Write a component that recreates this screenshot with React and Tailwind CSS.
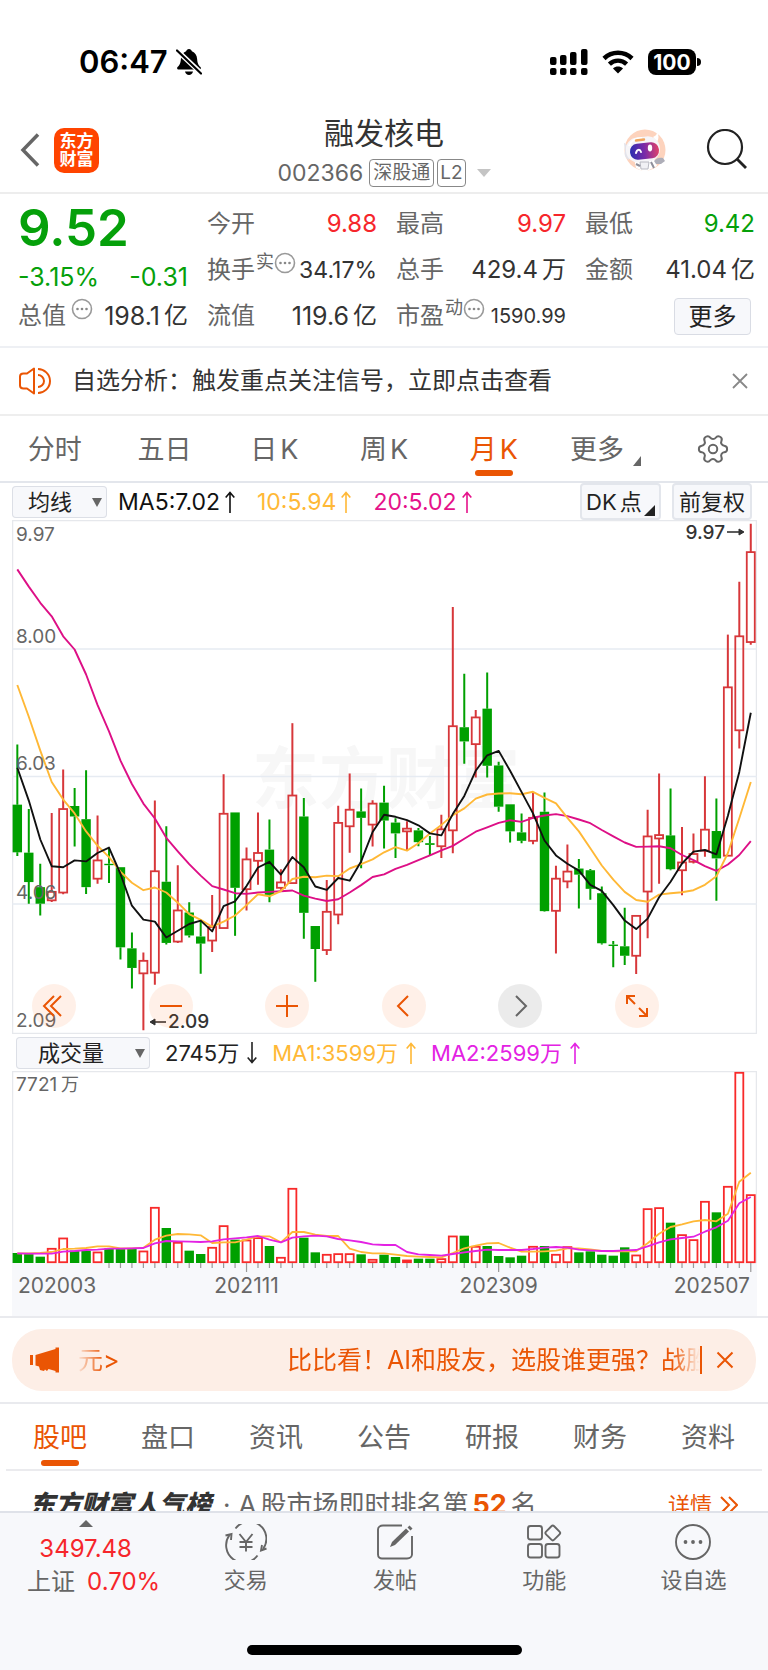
import React from "react";
import { Settings } from "lucide-react";

const STEP = 11.46;
const FIRST_X = 5.33;
const cx = (i) => FIRST_X + i * STEP;

// Each month: [direction, high, body top, body bottom, low], in plot units from the top of the price scale.
const CANDLES = [
  ["g", 679, 857, 998, 1009], ["g", 870, 999, 1086, 1150], ["g", 1032, 1101, 1150, 1185], ["r", 882, 1115, 1140, 1145],
  ["r", 753, 870, 1117, 1122], ["g", 808, 861, 892, 981], ["g", 755, 900, 1101, 1121], ["r", 889, 1022, 1076, 1091],
  ["g", 985, 1032, 1036, 1089], ["g", 1042, 1042, 1279, 1315], ["g", 1235, 1282, 1340, 1401], ["r", 1294, 1319, 1356, 1524],
  ["r", 845, 1054, 1354, 1390], ["g", 921, 1085, 1266, 1271], ["r", 1036, 1170, 1262, 1266], ["g", 1146, 1176, 1244, 1250],
  ["g", 1196, 1247, 1268, 1357], ["r", 1124, 1219, 1259, 1293], ["r", 767, 884, 1222, 1222], ["g", 880, 880, 1103, 1245],
  ["r", 984, 1019, 1107, 1170], ["r", 880, 1000, 1023, 1094], ["g", 901, 990, 1124, 1146], ["r", 1048, 1087, 1103, 1109],
  ["r", 616, 830, 1089, 1089], ["g", 837, 892, 1177, 1254], ["g", 1216, 1216, 1284, 1381], ["r", 1080, 1174, 1287, 1302],
  ["r", 860, 911, 1182, 1211], ["r", 765, 872, 921, 999], ["g", 809, 877, 896, 1045], ["r", 844, 854, 916, 981],
  ["g", 801, 851, 904, 987], ["g", 897, 910, 942, 1015], ["r", 906, 928, 936, 993], ["g", 926, 933, 968, 980],
  ["g", 950, 971, 976, 1007], ["r", 887, 930, 980, 1015], ["r", 272, 625, 933, 1001], ["g", 470, 628, 670, 736],
  ["r", 577, 599, 678, 777], ["g", 466, 573, 742, 777], ["g", 730, 741, 863, 878], ["g", 856, 856, 936, 969],
  ["g", 883, 939, 964, 971], ["r", 820, 896, 964, 974], ["g", 821, 878, 1172, 1174], ["r", 1038, 1076, 1171, 1297],
  ["r", 975, 1055, 1084, 1104], ["g", 1018, 1046, 1064, 1164], ["g", 1047, 1051, 1106, 1138], ["g", 1099, 1119, 1267, 1271],
  ["g", 1260, 1271, 1275, 1338], ["g", 1162, 1276, 1304, 1331], ["r", 1186, 1186, 1304, 1358], ["r", 872, 951, 1114, 1252],
  ["r", 765, 947, 957, 1091], ["g", 809, 948, 1048, 1051], ["r", 923, 1028, 1051, 1125], ["r", 942, 1003, 1026, 1031],
  ["r", 773, 931, 993, 1011], ["g", 839, 935, 1016, 1141], ["r", 354, 510, 1008, 1008], ["r", 198, 359, 637, 691],
  ["r", 26, 110, 376, 384],
];
const py = (v) => (v - 15) / 2.958;

const MA5 = [748, 845, 960, 1039, 1042, 1022, 1025, 1000, 984, 1062, 1156, 1197, 1203, 1250, 1230, 1210, 1200, 1232, 1157, 1143, 1098, 1043, 1026, 1064, 1012, 1042, 1099, 1109, 1074, 1082, 1025, 938, 887, 893, 903, 918, 942, 948, 885, 831, 757, 711, 698, 757, 820, 883, 963, 1007, 1032, 1052, 1094, 1112, 1154, 1200, 1225, 1194, 1131, 1085, 1031, 996, 991, 1004, 890, 760, 585];
const MA10 = [503, 597, 697, 790, 842, 883, 936, 978, 1012, 1055, 1088, 1110, 1102, 1117, 1147, 1181, 1198, 1218, 1203, 1185, 1154, 1122, 1128, 1113, 1077, 1070, 1072, 1067, 1069, 1046, 1033, 1019, 998, 983, 993, 971, 942, 917, 888, 868, 839, 827, 824, 823, 826, 819, 837, 853, 896, 936, 986, 1037, 1079, 1115, 1139, 1144, 1123, 1119, 1116, 1110, 1094, 1069, 1000, 897, 790];
const MA20 = [161, 212, 260, 300, 359, 398, 472, 562, 640, 727, 796, 854, 898, 955, 995, 1033, 1067, 1098, 1108, 1119, 1121, 1117, 1115, 1113, 1111, 1126, 1135, 1142, 1137, 1117, 1095, 1071, 1063, 1047, 1035, 1021, 1007, 992, 979, 958, 937, 924, 911, 903, 908, 896, 889, 885, 891, 901, 912, 932, 951, 969, 982, 981, 980, 986, 1006, 1021, 1039, 1053, 1034, 1006, 965];

const VOLUME = [670, 672, 681, 655, 624, 663, 663, 666, 656, 658, 656, 663, 532, 595, 637, 663, 673, 652, 587, 630, 630, 623, 649, 682, 475, 624, 668, 673, 671, 671, 674, 688, 675, 682, 690, 687, 687, 686, 618, 618, 649, 649, 679, 683, 678, 649, 649, 673, 650, 668, 665, 675, 678, 653, 675, 536, 533, 579, 614, 629, 514, 548, 469, 127, 494];
const VMA1 = [671, 671, 670, 667, 658, 657, 655, 650, 650, 656, 656, 654, 630, 618, 613, 614, 617, 640, 638, 638, 630, 620, 620, 638, 607, 607, 615, 619, 619, 657, 667, 671, 671, 675, 679, 681, 682, 683, 670, 656, 648, 641, 640, 654, 666, 666, 665, 663, 656, 656, 659, 664, 665, 664, 665, 641, 612, 592, 584, 575, 571, 575, 552, 456, 429];
const VMA2 = [671, 672, 672, 672, 666, 664, 661, 660, 657, 657, 656, 655, 641, 634, 635, 636, 637, 635, 629, 626, 623, 619, 630, 638, 624, 620, 618, 620, 628, 632, 637, 644, 646, 646, 667, 674, 676, 678, 673, 668, 664, 660, 661, 661, 661, 658, 654, 652, 654, 660, 662, 664, 664, 662, 661, 650, 638, 629, 625, 621, 606, 593, 573, 521, 502];
const vy = (v) => (v - 124) / 3;

const points = (list, fn) => list.map((v, i) => `${cx(i).toFixed(1)},${fn(v).toFixed(1)}`).join(" ");

function StatusBar() {
  return (
    <div className="flex h-[100px] items-center justify-between pt-6 pr-[67px] pl-[79px]">
      <div className="flex items-center gap-2">
        <span className="text-[31px] leading-9 font-semibold text-black">06:47</span>
        <svg width="26" height="28" viewBox="0 0 26 28" aria-hidden="true">
          <path d="M13 1c1.5 0 2.6 1 2.9 2.3 3.2 1.2 5 4 5.200 7.500.2 4.600 1.500 6.600 3.400 8.300.7.700.5 2.400-.8 2.400H2.300c-1.300 0-1.500-1.700-.8-2.400 1.900-1.700 3.200-3.700 3.400-8.300.2-3.500 2-6.300 5.200-7.500C10.400 2 11.500 1 13 1Z" />
          <path d="M9 23.500h8c-.5 2-2 3.500-4 3.500s-3.500-1.500-4-3.500Z" />
          <path d="M0 1.500 26 26" stroke="#fff" strokeWidth="5" />
          <path d="M1 2.500 25 25.500" stroke="#000" strokeWidth="2.200" strokeLinecap="round" />
        </svg>
      </div>
      <div className="flex items-center gap-[14px]">
        <svg width="38" height="26" viewBox="0 0 38 26" aria-hidden="true">
          {[[0, 8], [10, 6], [20, 3], [31, 0]].map(([x, y]) => (
            <g key={x}>
              <rect x={x} y={y} width="6.500" height={16 - y} rx="2" />
              <rect x={x} y="19" width="6.500" height="7" rx="2" />
            </g>
          ))}
        </svg>
        <svg width="32" height="24" viewBox="0 0 32 24" aria-hidden="true" fill="none" stroke="#000">
          <path d="M2 8.500c8-7.600 20-7.600 28 0" strokeWidth="4.600" />
          <path d="M7.400 14.200c5-4.800 12.200-4.800 17.200 0" strokeWidth="4.400" />
          <path d="m16 23.500-5-5c3-2.600 7-2.600 10 0Z" fill="#000" stroke="none" />
        </svg>
        <div className="flex items-center gap-px">
          <span className="flex h-[26px] w-12 items-center justify-center rounded-lg bg-black text-[21px] leading-none font-bold text-white">100</span>
          <span className="h-2 w-1 rounded-r-full bg-black" />
        </div>
      </div>
    </div>
  );
}

function Robot() {
  return (
    <svg width="44" height="44" viewBox="0 0 44 44" aria-hidden="true">
      <defs>
        <linearGradient id="visor" x1="0" x2="1">
          <stop offset="0" stopColor="#2b2fb0" />
          <stop offset="0.5" stopColor="#7a2aa8" />
          <stop offset="1" stopColor="#e0436a" />
        </linearGradient>
      </defs>
      <circle cx="23" cy="22" r="20.500" fill="#fdd3bd" />
      <path d="M12 30h20l3 8-12 6-9-4Z" fill="#fff" />
      <path d="M31 9c3-1 4-3 4-5 2 3 2 7 0 10Z" fill="#fff" />
      <path d="M2 15c1 0 3 2 4 3l1 14c-4-2-5-5-4-9Z" fill="#e3e3ea" />
      <rect x="4" y="9" width="34" height="25" rx="12" fill="#f6f5f8" transform="rotate(-6 20 22)" />
      <path d="M7 18c2-5 7-8 13-8" stroke="#fff" strokeWidth="2" fill="none" />
      <rect x="8" y="15" width="29" height="16" rx="7.500" fill="url(#visor)" transform="rotate(-6 22 23)" />
      <path d="M14 25c1-4 4-4 5-1" stroke="#fff" strokeWidth="2" fill="none" strokeLinecap="round" />
      <ellipse cx="28" cy="20" rx="2.200" ry="3.400" fill="#fff" />
      <path d="M14 12.500 22 11.500" stroke="#f0a55c" strokeWidth="2.400" strokeLinecap="round" />
      <path d="M18 34h9l-1 7h-7Z" fill="#f1f1f5" stroke="#b9b9c2" />
      <path d="m14 36 4 2M29 34l3 6" stroke="#8f8f9a" strokeWidth="2" />
      <path d="M32 33c2-3 6-4 9-3l2 3-4 3h-5Z" fill="#aeaeb8" />
    </svg>
  );
}

function Header() {
  return (
    <header className="grid h-[94px] grid-cols-[1fr_auto_1fr] items-center border-b-2 border-[#ededed] px-5 pt-2">
      <div className="flex items-center gap-[14px]">
        <button type="button" aria-label="返回">
          <svg width="20" height="34" viewBox="0 0 20 34" fill="none" stroke="#666" strokeWidth="3.500" aria-hidden="true">
            <path d="M18 1.500 3 17l15 15.500" />
          </svg>
        </button>
        <a href="#home" className="flex h-[45px] w-[45px] flex-col items-center justify-center rounded-[10px] bg-[#ff4400] text-[17px] leading-[18px] font-bold text-white">
          <span>东方</span>
          <span>财富</span>
        </a>
      </div>
      <div className="flex flex-col items-center gap-[6px]">
        <h1 className="text-[30px] leading-10 text-[#333]">融发核电</h1>
        <div className="flex items-center gap-[3px] text-[#666]">
          <span className="pr-[3px] text-[23px] leading-7">002366</span>
          <span className="rounded border border-[#888] px-[3px] text-[19px] leading-[26px]">深股通</span>
          <span className="rounded border border-[#888] px-[2px] text-[19px] leading-[26px]">L2</span>
          <svg className="ml-2" width="14" height="8" viewBox="0 0 14 8" aria-hidden="true">
            <path d="M0 0h14L7 8Z" fill="#c4c4c4" />
          </svg>
        </div>
      </div>
      <div className="flex items-center justify-end gap-10">
        <button type="button" aria-label="智能助手"><Robot /></button>
        <button type="button" aria-label="搜索">
          <svg width="42" height="42" viewBox="0 0 42 42" fill="none" stroke="#222" strokeWidth="2.200" aria-hidden="true">
            <circle cx="19" cy="18" r="17" />
            <path d="m31 30 9 9" strokeWidth="2.800" />
          </svg>
        </button>
      </div>
    </header>
  );
}

function Info() {
  return (
    <svg width="22" height="22" viewBox="0 0 22 22" className="shrink-0 self-start" aria-hidden="true">
      <circle cx="11" cy="11" r="9.500" fill="none" stroke="#999" strokeWidth="1.600" />
      <g fill="#888"><circle cx="6.500" cy="11" r="1.300" /><circle cx="11" cy="11" r="1.300" /><circle cx="15.500" cy="11" r="1.300" /></g>
    </svg>
  );
}

function Value({ value, unit, tone = "text-[#333]", size = "text-[25px]" }) {
  return (
    <span className={`flex items-center gap-1 leading-9 ${tone} ${size}`}>
      {value}
      {unit && <span className="text-2xl leading-9">{unit}</span>}
    </span>
  );
}

function Stat({ label, sup, info, ...value }) {
  return (
    <div className="flex h-9 items-center justify-between whitespace-nowrap">
      <span className="flex h-9 items-center">
        <span className="text-2xl leading-9 text-[#666]">{label}</span>
        {sup && <span className="ml-px self-start text-[18px] leading-5 text-[#666]">{sup}</span>}
        {info && <Info />}
      </span>
      <Value {...value} />
    </div>
  );
}

const RED = "text-[#f6262b]";
const GREEN = "text-[#05a00a]";

function Quote() {
  return (
    <section className="grid grid-cols-4 gap-x-[19px] border-b-2 border-[#eef0f4] pt-3 pr-[13px] pb-[11px] pl-[18px]">
      <div className="flex flex-col">
        <div className={`h-[53px] text-[51px] leading-[43px] font-semibold ${GREEN}`}>9.52</div>
        <div className="flex h-9 items-center justify-between"><Value value="-3.15%" tone={GREEN} /><Value value="-0.31" tone={GREEN} /></div>
        <div className="h-[3px]" />
        <div className="flex h-9 items-center justify-between whitespace-nowrap">
          <span className="flex h-9 items-center gap-[5px]"><span className="text-2xl text-[#666]">总值</span><Info /></span>
          <Value value="198.1" unit="亿" />
        </div>
      </div>
      <div className="flex flex-col gap-[10px]">
        <Stat label="今开" value="9.88" tone={RED} size="text-2xl" />
        <Stat label="换手" sup="实" info value="34.17%" size="text-[23px]" />
        <Stat label="流值" value="119.6" unit="亿" />
      </div>
      <div className="flex flex-col gap-[10px]">
        <Stat label="最高" value="9.97" tone={RED} size="text-2xl" />
        <Stat label="总手" value="429.4" unit="万" size="text-2xl" />
        <Stat label="市盈" sup="动" info value="1590.99" size="text-xl" />
      </div>
      <div className="flex flex-col gap-[10px]">
        <Stat label="最低" value="9.42" tone={GREEN} size="text-2xl" />
        <Stat label="金额" value="41.04" unit="亿" size="text-2xl" />
        <button type="button" className="mr-1 h-[37px] w-[77px] self-end rounded border border-[#d9dce4] bg-[#f7f8fb] text-2xl leading-8 text-[#222]">更多</button>
      </div>
    </section>
  );
}

function Notice() {
  return (
    <section className="flex h-[68px] items-center border-b-2 border-[#eeeeee] pr-5 pb-px pl-[19px]">
      <svg width="33" height="28" viewBox="0 0 33 28" fill="none" stroke="#ea5504" strokeWidth="2" aria-hidden="true">
        <path d="M15 1.500v25l-7-5H4.500c-2 0-3.500-1-3.500-3v-9c0-2 1.500-3 3.500-3H8Z" strokeLinejoin="round" />
        <path d="M19 2c6 0 12 5 12 12s-6 12-12 12" />
        <path d="M19 8c3 0 6 2.500 6 6s-3 6-6 6" />
      </svg>
      <a href="#signal" className="ml-5 flex-1 text-2xl leading-9 text-[#333]">自选分析：触发重点关注信号，立即点击查看</a>
      <button type="button" aria-label="关闭提示">
        <svg width="16" height="16" viewBox="0 0 16 16" stroke="#888" strokeWidth="1.800" aria-hidden="true"><path d="m1 1 14 14M15 1 1 15" /></svg>
      </button>
    </section>
  );
}

function PeriodTabs() {
  const tabs = [["分时"], ["五日"], ["日", "K"], ["周", "K"], ["月", "K"], ["更多"]];
  return (
    <nav className="grid h-[67px] grid-cols-7 border-b-2 border-[#e3e6ec]">
      {tabs.map(([t, k]) => {
        const on = t === "月";
        return (
          <button key={t} type="button" className={`flex flex-col items-center pt-[14px] text-[27px] leading-10 ${on ? "text-[#ea5504]" : "text-[#666]"}`}>
            <span className="flex items-end gap-[3px]">
              <span>{t}</span>
              {k && <span>{k}</span>}
              {t === "更多" && (
                <svg className="-mr-1 mb-1 ml-[6px]" width="8" height="10" viewBox="0 0 8 10" aria-hidden="true"><path d="M8 0v10H0Z" fill="#666" /></svg>
              )}
            </span>
            {on && <span className="h-[6px] w-[38px] rounded-full bg-[#ea5504]" />}
          </button>
        );
      })}
      <button type="button" aria-label="图表设置" className="flex items-center justify-center">
        <Settings size={34} strokeWidth={1.4} className="rotate-90 text-[#666]" />
      </button>
    </nav>
  );
}

function Picker({ id, label, value, width, pad }) {
  return (
    <div className={`relative h-8 ${width}`}>
      <label htmlFor={id} className="sr-only">{label}</label>
      <select id={id} className={`h-8 w-full appearance-none rounded bg-[#f7f8fb] py-0 text-[22px] leading-8 text-[#222] ring-1 ring-[#dcdfe6] ring-inset ${pad}`}>
        <option>{value}</option>
      </select>
      <svg className="pointer-events-none absolute top-3 right-[5px]" width="10" height="9" viewBox="0 0 10 9" aria-hidden="true"><path d="M0 0h10L5 9Z" fill="#666" /></svg>
    </div>
  );
}

function Arrow({ down }) {
  return (
    <svg width="10" height="22" viewBox="0 0 10 22" fill="none" stroke="currentColor" strokeWidth="1.600" className={down ? "rotate-180" : ""} aria-hidden="true">
      <path d="M5 22V1.500M.7 6.500 5 1.500l4.300 5" />
    </svg>
  );
}

function PriceChart() {
  const labels = [["9.97", 21], ["8.00", 123], ["6.03", 250], ["4.06", 379], ["2.09", 507]];
  return (
    <svg viewBox="0 0 745 514" className="block w-full" role="img" aria-label="月K线图">
      <rect x="0.500" y="0.500" width="744" height="513" fill="#fff" stroke="#e6e8ec" strokeWidth="1.500" />
      <text x="240" y="283" fontSize="67" fontWeight="700" fill="#f7f7f7">东方财富</text>
      {[129, 256.500, 384].map((y) => <path key={y} d={`M0 ${y}H745`} stroke="#e6ebf2" strokeWidth="1.500" />)}
      {CANDLES.map(([d, h, t, b, l], i) => {
        const x = cx(i);
        const color = d === "g" ? "#00a000" : "#d7373a";
        return (
          <g key={i} stroke={color}>
            <path d={`M${x} ${py(h)}V${py(t)}M${x} ${py(b)}V${py(l)}`} strokeWidth="2" />
            {d === "g"
              ? <rect x={x - 4.700} y={py(t)} width="9.400" height={Math.max(py(b) - py(t), 1)} fill={color} stroke="none" />
              : <rect x={x - 4} y={py(t)} width="8" height={py(b) - py(t)} fill="none" strokeWidth="1.800" />}
          </g>
        );
      })}
      <g fill="none" strokeWidth="1.900" strokeLinejoin="round">
        <polyline points={points(MA20, py)} stroke="#dd0f86" />
        <polyline points={points(MA10, py)} stroke="#ffb836" />
        <polyline points={points(MA5, py)} stroke="#111" />
      </g>
      <g fontSize="19" fill="#666">{labels.map(([t, y]) => <text key={t} x="4" y={y}>{t}</text>)}</g>
      <g fontSize="19" fontWeight="500" fill="#333">
        <text x="713" y="19" textAnchor="end">9.97</text>
        <text x="156" y="508">2.09</text>
      </g>
      <g stroke="#333" strokeWidth="1.600" fill="#333">
        <path d="M715 12h16" /><path d="m727 9 5 3-5 3Z" strokeWidth="1" />
        <path d="M139 502h15" /><path d="m143 499-5 3 5 3Z" strokeWidth="1" />
      </g>
    </svg>
  );
}

function ChartTools() {
  const tools = [
    ["最早", <path d="M14 4 4 14l10 10M21 4 11 14l10 10" />],
    ["缩小", <path d="M3 14h22" />],
    ["放大", <path d="M3 14h22M14 3v22" />],
    ["向左", <path d="M18 4 8 14l10 10" />],
    ["向右", <path d="m10 4 10 10-10 10" />],
    ["全屏", <path d="M4 12V4h8M4 4l8 8M24 16v8h-8M24 24l-8-8" />],
  ];
  return (
    <div className="absolute right-[98px] bottom-[6px] left-5 flex justify-between">
      {tools.map(([name, shape]) => (
        <button key={name} type="button" aria-label={name} className={`flex h-11 w-11 items-center justify-center rounded-full ${name === "向右" ? "bg-black/8 text-[#666]" : "bg-[#ff5a00]/9 text-[#ea5504]"}`}>
          <svg width="28" height="28" viewBox="0 0 28 28" fill="none" stroke="currentColor" strokeWidth="2" aria-hidden="true">{shape}</svg>
        </button>
      ))}
    </div>
  );
}

function VolumeChart() {
  return (
    <svg viewBox="0 0 745 245" className="block w-full" role="img" aria-label="成交量图">
      <rect x="0" y="192" width="745" height="53" fill="#f7f8fb" />
      <path d="M.5 192V.5h744V192" fill="#fff" stroke="#e6e8ec" strokeWidth="1.500" />
      {VOLUME.map((v, i) => {
        const x = cx(i);
        const h = vy(700) - vy(v);
        return CANDLES[i][0] === "g"
          ? <rect key={i} x={x - 4.700} y={vy(v)} width="9.400" height={h} fill="#00a000" />
          : <rect key={i} x={x - 4} y={vy(v) + 0.800} width="8" height={h - 1.600} fill="#fff" stroke="#f82a2a" strokeWidth="1.800" />;
      })}
      <g fill="none" strokeWidth="1.800" strokeLinejoin="round">
        <polyline points={points(VMA1, vy)} stroke="#ffb836" />
        <polyline points={points(VMA2, vy)} stroke="#e322e3" />
      </g>
      {CANDLES.map((_, i) => i >= 8 && (
        <path key={i} d={`M${cx(i)} 192v${i === 20 || i === 42 || i === 64 ? 9 : 5}`} stroke="#999" strokeWidth="1.200" />
      ))}
      <g fontSize="19" fill="#666">
        <text x="4" y="20">7721</text>
        <text x="49" y="20" fontSize="18">万</text>
      </g>
      <g fontSize="21" fill="#666">
        <text x="6" y="222">202003</text>
        <text x={cx(20)} y="222" textAnchor="middle">202111</text>
        <text x={cx(42)} y="222" textAnchor="middle">202309</text>
        <text x="738" y="222" textAnchor="end">202507</text>
      </g>
    </svg>
  );
}

function Charts() {
  return (
    <section className="border-b-2 border-[#e9eaee]">
      <div className="flex h-[37px] items-center pr-4 pl-3 text-[22px] leading-8">
        <Picker id="overlay" label="主图指标" value="均线" width="w-[95px]" pad="pl-4" />
        <div className="ml-[11px] flex flex-1 items-center gap-[22px] text-[23px]">
          <span className="flex items-center gap-[5px] text-[#111]">MA5:7.02<Arrow /></span>
          <span className="flex items-center gap-[5px] text-[#ffb836]">10:5.94<Arrow /></span>
          <span className="flex items-center gap-[5px] text-[#e5128a]">20:5.02<Arrow /></span>
        </div>
        <div className="flex gap-[11px] text-[#222]">
          <button type="button" className="relative flex h-[37px] w-[81px] items-center gap-[3px] rounded border-2 border-[#e3e6ec] bg-[#f7f8fb] pl-1">
            <span>DK</span><span>点</span>
            <svg className="absolute right-1 bottom-[2px]" width="11" height="11" viewBox="0 0 11 11" aria-hidden="true"><path d="M11 0v11H0Z" fill="#222" /></svg>
          </button>
          <button type="button" className="h-[37px] w-20 rounded border-2 border-[#e3e6ec] bg-[#f7f8fb]">前复权</button>
        </div>
      </div>
      <div className="relative mr-[11px] ml-3">
        <PriceChart />
        <ChartTools />
      </div>
      <div className="flex h-[37px] items-center gap-[15px] pl-4 text-[22px] leading-8">
        <Picker id="subchart" label="副图指标" value="成交量" width="w-[134px]" pad="pl-[22px]" />
        <span className="flex items-center gap-2 text-[#222]">2745万<Arrow down /></span>
        <span className="flex items-center gap-2 text-[#ffb836]">MA1:3599万<Arrow /></span>
        <span className="flex items-center gap-2 text-[#e322e3]">MA2:2599万<Arrow /></span>
      </div>
      <div className="mr-[11px] ml-3"><VolumeChart /></div>
    </section>
  );
}

function Banner() {
  return (
    <section className="border-b-2 border-[#e9eaee] px-3 py-[11px]">
      <div className="flex h-[62px] items-center rounded-[30px] bg-[#fdeee6] pr-[22px] pl-[18px] text-[#ea5504]">
        <svg width="30" height="26" viewBox="0 0 30 26" fill="currentColor" aria-hidden="true">
          <path d="M0 8h3v10H0ZM5.500 8 25.500 2V0.500h3.500v25h-3.500V24l-7-2-1.500 2-2-1.500-1 1.500-4-1-1-3.500-3.500-1Z" />
        </svg>
        <a href="#activity" className="ml-4 flex min-w-0 flex-1 overflow-hidden text-[25px] leading-9 whitespace-nowrap [mask-image:linear-gradient(to_right,transparent,black_28px,black_calc(100%-28px),transparent)]">
          <span className="w-[211px] shrink-0 pl-[2px]">元&gt;</span>
          <span>比比看！AI和股友，选股谁更强？战胜</span>
        </a>
        <span className="h-7 w-[2px] bg-[#ea5504]" />
        <button type="button" aria-label="关闭活动" className="ml-[14px]">
          <svg width="18" height="18" viewBox="0 0 18 18" stroke="currentColor" strokeWidth="2" aria-hidden="true"><path d="m1.500 1.500 15 15M16.500 1.500l-15 15" /></svg>
        </button>
      </div>
    </section>
  );
}

function ContentTabs() {
  return (
    <nav className="mx-[6px] grid h-[67px] grid-cols-7 border-b-2 border-[#ebebee]">
      {["股吧", "盘口", "资讯", "公告", "研报", "财务", "资料"].map((t, i) => (
        <a key={t} href={`#tab-${i}`} className={`flex flex-col items-center pt-[14px] text-[27px] leading-10 ${i === 0 ? "text-[#ea5504]" : "text-[#666]"}`}>
          {t}
          {i === 0 && <span className="mt-[2px] h-[6px] w-[38px] rounded-full bg-[#ea5504]" />}
        </a>
      ))}
    </nav>
  );
}

function Ranking() {
  return (
    <section className="flex h-10 items-start overflow-hidden pt-[14px] pr-[30px] pl-[29px] text-[27px] leading-10 whitespace-nowrap text-[#666]">
      <h2 className="text-[26px] leading-10 font-black text-[#333] italic">东方财富人气榜</h2>
      <p className="flex flex-1 gap-1 pl-3 text-[26px] leading-10">
        <span className="pr-1">·</span><span>A</span><span>股市场即时排名第</span><b className="text-[27px] font-bold text-[#ea5504]">52</b><span>名</span>
      </p>
      <a href="#rank" className="flex items-center gap-2 text-[22px] leading-10 text-[#ea5504]">
        详情
        <svg width="18" height="18" viewBox="0 0 18 18" fill="none" stroke="currentColor" strokeWidth="2" aria-hidden="true"><path d="m1 1 8 8-8 8M9 1l8 8-8 8" /></svg>
      </a>
    </section>
  );
}

function NavItem({ label, children }) {
  return (
    <button type="button" className="flex flex-col items-center pt-[11px] text-[22px] leading-8 text-[#666]">
      <svg width="42" height="36" viewBox="0 0 42 36" fill="none" stroke="#666" strokeWidth="1.900" aria-hidden="true">{children}</svg>
      <span className="mt-1">{label}</span>
    </button>
  );
}

function BottomNav() {
  return (
    <footer className="border-t-2 border-[#dfe2e9] bg-[#f7f8fb]">
      <div className="grid grid-cols-[171fr_149fr_149fr_149fr_149fr]">
        <a href="#index" className="flex flex-col items-center pt-[7px] text-2xl">
          <svg width="14" height="7" viewBox="0 0 14 7" aria-hidden="true"><path d="m7 0 7 7H0Z" fill="#666" /></svg>
          <span className={`mt-[5px] text-2xl leading-[34px] ${RED}`}>3497.48</span>
          <span className="flex gap-3 pl-4 leading-8 text-[#666]">上证<span className={`text-2xl leading-8 ${RED}`}>0.70%</span></span>
        </a>
        <NavItem label="交易">
          <path d="M10.500 4.500A17 17 0 0 1 38 25M32.500 31.500A17 17 0 0 1 4.500 11" />
          <path d="m.5 11.500 6-1.500-.5 6M41.500 24.500l-5.500 2 1-5.500" />
          <path d="m14.500 10 6.500 8 6.500-8M21 18v9.500M14.500 18h13M14.500 23h13" />
        </NavItem>
        <NavItem label="发帖">
          <path d="M28 1.500H9c-3 0-5 2-5 4v25c0 2.500 2 4 4 4h25c3 0 5-2 5-4V12" />
          <path d="m16 23 2-5L32 4.500l3 3L21 21Z" fill="#666" stroke="none" />
          <path d="m33.500 3.500 2-2 3 3-2 2Z" fill="#666" stroke="none" />
        </NavItem>
        <NavItem label="功能">
          <rect x="5" y="2" width="14" height="13.500" rx="2.500" /><rect x="5" y="20" width="14" height="13.500" rx="2.500" /><rect x="22.500" y="20" width="14" height="13.500" rx="2.500" />
          <rect x="24" y="3.200" width="11.500" height="11.500" rx="2" transform="rotate(45 29.750 9)" />
        </NavItem>
        <NavItem label="设自选">
          <circle cx="21" cy="18" r="17" />
          <g fill="#666" stroke="none"><circle cx="13.500" cy="18" r="1.900" /><circle cx="21" cy="18" r="1.900" /><circle cx="28.500" cy="18" r="1.900" /></g>
        </NavItem>
      </div>
      <div className="flex justify-center pt-[47px] pb-4">
        <span className="h-[10px] w-[275px] rounded-full bg-black" />
      </div>
    </footer>
  );
}

export default function App() {
  return (
    <div className="w-full overflow-hidden bg-white font-[Inter,'Noto_Sans_CJK_SC',sans-serif]">
      <StatusBar />
      <Header />
      <main>
        <Quote />
        <Notice />
        <PeriodTabs />
        <Charts />
        <Banner />
        <ContentTabs />
        <Ranking />
      </main>
      <BottomNav />
    </div>
  );
}
